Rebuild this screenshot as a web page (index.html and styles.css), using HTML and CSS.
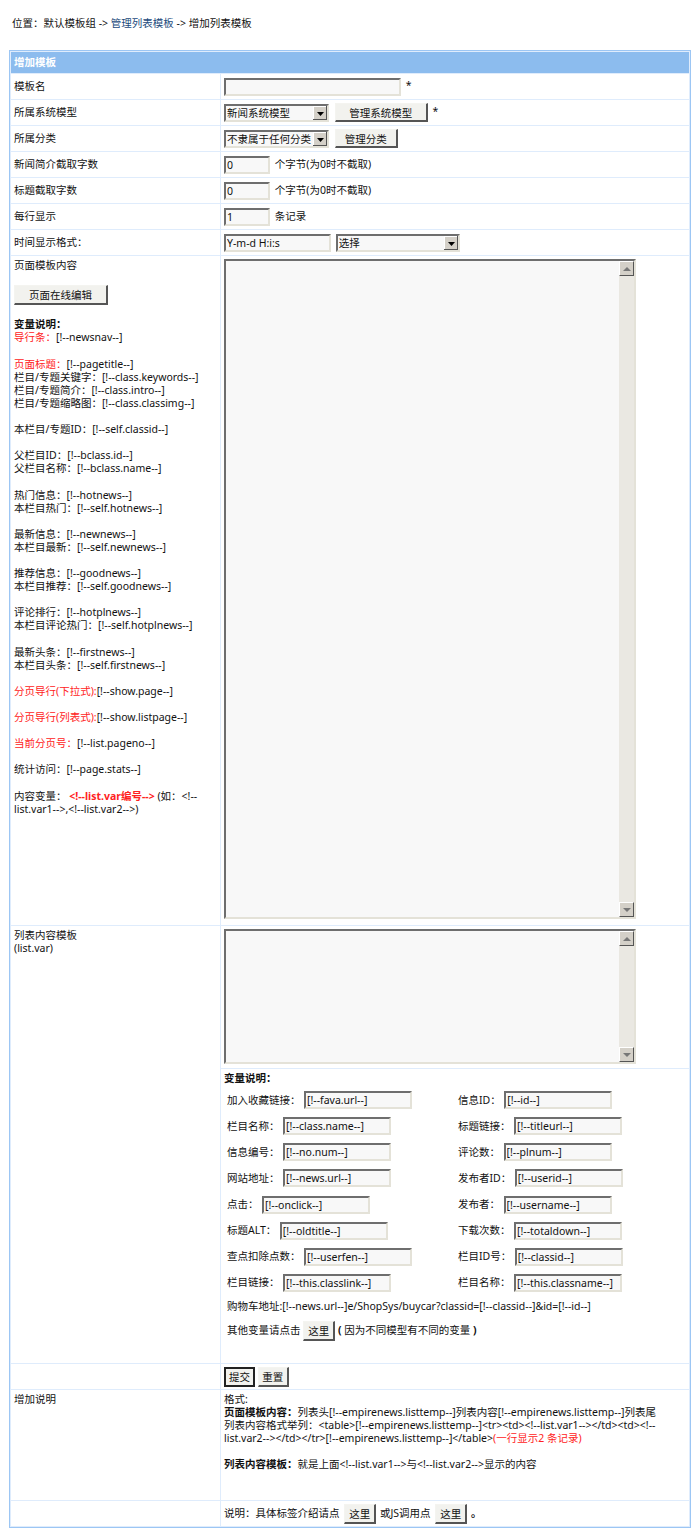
FILE: index.html
```html
<!DOCTYPE html>
<html lang="zh-CN">
    <head>
        <meta charset="UTF-8" />
        <title>增加列表模板</title>
        <link rel="stylesheet" href="styles.css">
    </head>
    <body>
        <div class="crumb">位置：默认模板组 -&gt; <a href="#">管理列表模板</a> -&gt; 增加列表模板</div>
        <form>
            <table class="tbl" cellspacing="1">
                <colgroup><col class="col-left"><col></colgroup>
                <tr class="head"><td colspan="2">增加模板</td></tr>
                <tr class="row">
                    <td>模板名</td>
                    <td><input class="txt w-name" type="text"> <span class="star">*</span></td>
                </tr>
                <tr class="row">
                    <td>所属系统模型</td>
                    <td>
                        <select class="sel w-sel"><option>新闻系统模型</option></select>
                        <button type="button" class="btn w-btn1">管理系统模型</button> <span class="star">*</span>
                    </td>
                </tr>
                <tr class="row">
                    <td>所属分类</td>
                    <td>
                        <select class="sel w-sel"><option>不隶属于任何分类</option></select>
                        <button type="button" class="btn w-btn2">管理分类</button>
                    </td>
                </tr>
                <tr class="row">
                    <td>新闻简介截取字数</td>
                    <td><input class="txt w-num" type="text" value="0"> 个字节(为0时不截取)</td>
                </tr>
                <tr class="row">
                    <td>标题截取字数</td>
                    <td><input class="txt w-num" type="text" value="0"> 个字节(为0时不截取)</td>
                </tr>
                <tr class="row">
                    <td>每行显示</td>
                    <td><input class="txt w-num" type="text" value="1"> 条记录</td>
                </tr>
                <tr class="row">
                    <td>时间显示格式：</td>
                    <td>
                        <input class="txt w-time" type="text" value="Y-m-d H:i:s">
                        <select class="sel w-sel2"><option>选择</option></select>
                    </td>
                </tr>
                <tr class="page-row">
                    <td class="top">
                        页面模板内容<br><br>
                        <button type="button" class="btn w-edit">页面在线编辑</button><br><br>
                        <b>变量说明：</b><br>
                        <span class="red">导行条：</span>[!--newsnav--]<br><br>
                        <span class="red">页面标题：</span>[!--pagetitle--]<br>
                        栏目/专题关键字：[!--class.keywords--]<br>
                        栏目/专题简介：[!--class.intro--]<br>
                        栏目/专题缩略图：[!--class.classimg--]<br><br>
                        本栏目/专题ID：[!--self.classid--]<br><br>
                        父栏目ID：[!--bclass.id--]<br>
                        父栏目名称：[!--bclass.name--]<br><br>
                        热门信息：[!--hotnews--]<br>
                        本栏目热门：[!--self.hotnews--]<br><br>
                        最新信息：[!--newnews--]<br>
                        本栏目最新：[!--self.newnews--]<br><br>
                        推荐信息：[!--goodnews--]<br>
                        本栏目推荐：[!--self.goodnews--]<br><br>
                        评论排行：[!--hotplnews--]<br>
                        本栏目评论热门：[!--self.hotplnews--]<br><br>
                        最新头条：[!--firstnews--]<br>
                        本栏目头条：[!--self.firstnews--]<br><br>
                        <span class="red">分页导行(下拉式):</span>[!--show.page--]<br><br>
                        <span class="red">分页导行(列表式):</span>[!--show.listpage--]<br><br>
                        <span class="red">当前分页号：</span>[!--list.pageno--]<br><br>
                        统计访问：[!--page.stats--]<br><br>
                        内容变量： <b class="red">&lt;!--list.var编号--&gt;</b> (如：&lt;!--list.var1--&gt;,&lt;!--list.var2--&gt;)
                    </td>
                    <td class="top">
                        <div class="editor big">
                            <textarea></textarea>
                            <div class="scroll"><span class="sb up"></span><span class="track"></span><span class="sb down"></span></div>
                        </div>
                    </td>
                </tr>
                <tr class="list-row">
                    <td class="top" rowspan="2">列表内容模板<br>(list.var)</td>
                    <td class="top">
                        <div class="editor small">
                            <textarea></textarea>
                            <div class="scroll"><span class="sb up"></span><span class="track"></span><span class="sb down"></span></div>
                        </div>
                    </td>
                </tr>
                <tr class="vars-row">
                    <td class="top">
                        <b>变量说明：</b>
                        <div class="vars">
                            <label class="var">加入收藏链接：<input class="txt w-var" type="text" value="[!--fava.url--]"></label>
                            <label class="var">信息ID：<input class="txt w-var" type="text" value="[!--id--]"></label>
                            <label class="var">栏目名称：<input class="txt w-var" type="text" value="[!--class.name--]"></label>
                            <label class="var">标题链接：<input class="txt w-var" type="text" value="[!--titleurl--]"></label>
                            <label class="var">信息编号：<input class="txt w-var" type="text" value="[!--no.num--]"></label>
                            <label class="var">评论数：<input class="txt w-var" type="text" value="[!--plnum--]"></label>
                            <label class="var">网站地址：<input class="txt w-var" type="text" value="[!--news.url--]"></label>
                            <label class="var">发布者ID：<input class="txt w-var" type="text" value="[!--userid--]"></label>
                            <label class="var">点击：<input class="txt w-var" type="text" value="[!--onclick--]"></label>
                            <label class="var">发布者：<input class="txt w-var" type="text" value="[!--username--]"></label>
                            <label class="var">标题ALT：<input class="txt w-var" type="text" value="[!--oldtitle--]"></label>
                            <label class="var">下载次数：<input class="txt w-var" type="text" value="[!--totaldown--]"></label>
                            <label class="var">查点扣除点数：<input class="txt w-var" type="text" value="[!--userfen--]"></label>
                            <label class="var">栏目ID号：<input class="txt w-var" type="text" value="[!--classid--]"></label>
                            <label class="var">栏目链接：<input class="txt w-var" type="text" value="[!--this.classlink--]"></label>
                            <label class="var">栏目名称：<input class="txt w-var" type="text" value="[!--this.classname--]"></label>
                        </div>
                        <div class="note cart">购物车地址:[!--news.url--]e/ShopSys/buycar?classid=[!--classid--]&amp;id=[!--id--]</div>
                        <div class="note">其他变量请点击 <button type="button" class="btn w-here">这里</button> <b>(</b> 因为不同模型有不同的变量 <b>)</b></div>
                    </td>
                </tr>
                <tr class="row">
                    <td></td>
                    <td>
                        <button type="submit" class="btn w-sub main">提交</button>
                        <button type="reset" class="btn w-sub">重置</button>
                    </td>
                </tr>
                <tr class="desc-row">
                    <td class="top">增加说明</td>
                    <td class="top">
                        格式:<br>
                        <b>页面模板内容：</b>列表头[!--empirenews.listtemp--]列表内容[!--empirenews.listtemp--]列表尾<br>
                        列表内容格式举列：&lt;table&gt;[!--empirenews.listtemp--]&lt;tr&gt;&lt;td&gt;&lt;!--list.var1--&gt;&lt;/td&gt;&lt;td&gt;&lt;!--list.var2--&gt;&lt;/td&gt;&lt;/tr&gt;[!--empirenews.listtemp--]&lt;/table&gt;<span class="red">(一行显示2 条记录)</span><br><br>
                        <b>列表内容模板：</b>就是上面&lt;!--list.var1--&gt;与&lt;!--list.var2--&gt;显示的内容
                    </td>
                </tr>
                <tr class="row">
                    <td></td>
                    <td>
                        说明：具体标签介绍请点 <button type="button" class="btn w-here foot-btn">这里</button> 或JS调用点 <button type="button" class="btn w-here foot-btn">这里</button> <b>。</b>
                    </td>
                </tr>
            </table>
        </form>
    </body>
</html>
```

FILE: styles.css
```css
body {
    margin: 0;
    padding: 0 9px;
    background-color: #fff;
    color: #111;
    font-family: "Noto Sans", "Noto Sans CJK SC", sans-serif;
    font-size: 10.5px;
    line-height: 13.1px;
}
.crumb {
    height: 33px;
    padding: 17px 0 0 3px;
}
.crumb a {
    color: #1b4a7c;
    text-decoration: none;
}
.tbl {
    width: 682px;
    table-layout: fixed;
    border: 1px solid #9cc6f4;
    border-collapse: separate;
    border-spacing: 1px;
    background-color: #dfecfc;
}
.col-left {
    width: 209px;
}
.tbl td {
    padding: 0 3px;
    background-color: #fff;
}
.tbl .head td {
    height: 21px;
    background-color: #8cbcee;
    color: #fff;
    font-weight: bold;
}
.row td {
    height: 25px;
}
.top {
    vertical-align: top;
}
.tbl .top {
    padding-top: 3px;
}
.page-row td {
    height: 666px;
}
.list-row td {
    height: 139px;
}
.vars-row td {
    height: 291px;
}
.desc-row td {
    height: 107px;
}
.red {
    color: #f22;
}
.star {
    margin-left: 2px;
}
.txt, .sel, .btn, textarea {
    font-family: inherit;
    font-size: 10.5px;
    box-sizing: border-box;
    color: #111;
    vertical-align: middle;
}
.txt {
    height: 18px;
    padding: 0 1px;
    border: 2px solid;
    border-color: #6e6e6e #e4e2d8 #e4e2d8 #6e6e6e;
    background-color: #f8f8f8;
    outline: none;
}
.sel {
    height: 18px;
    padding: 0 14px 0 1px;
    border: 2px solid;
    border-color: #6e6e6e #e4e2d8 #e4e2d8 #6e6e6e;
    border-radius: 0;
    appearance: none;
    -webkit-appearance: none;
    background: #f8f8f8 url("data:image/svg+xml,%3Csvg xmlns='http://www.w3.org/2000/svg' width='14' height='14'%3E%3Crect width='14' height='14' fill='%23d4d0c8'/%3E%3Cpath d='M0 0h14v1H1v13H0z' fill='%23fff'/%3E%3Cpath d='M14 14H0v-1h13V0h1z' fill='%23555'/%3E%3Cpath d='M4 6h7L7.5 10z' fill='%23000'/%3E%3C/svg%3E") no-repeat right center;
}
.btn {
    height: 19px;
    padding: 0;
    border: 1px solid;
    border-color: #f4f4f0 #555 #555 #f4f4f0;
    border-width: 1px 2px 2px 1px;
    background-color: #f2f2ee;
    cursor: pointer;
}
.btn.main {
    border: 2px solid #222;
}
.w-name { width: 177px; }
.w-sel { width: 105px; }
.w-sel2 { width: 124px; margin-left: 2px; }
.w-btn1 { width: 93px; margin-left: 3px; }
.w-btn2 { width: 63px; margin-left: 3px; }
.w-num { width: 46px; margin-right: 2px; }
.w-time { width: 107px; }
.w-edit { width: 94px; height: 20px; }
.w-here { width: 32px; height: 20px; }
.foot-btn { margin: 0 1px 0 2px; }
.w-sub { width: 31px; height: 20px; }
.w-var { width: 108px; margin-left: 3.5px; }
.editor {
    display: flex;
    box-sizing: border-box;
    width: 412px;
    border: 2px solid;
    border-color: #6e6e6e #e4e2d8 #e4e2d8 #6e6e6e;
    background-color: #f8f8f8;
}
.big {
    height: 660px;
}
.small {
    height: 135px;
}
.editor textarea {
    flex: 1;
    min-width: 0;
    border: none;
    padding: 0;
    background: transparent;
    resize: none;
    outline: none;
}
.scroll {
    display: flex;
    flex-direction: column;
    width: 15px;
    background-color: #eae8e2;
}
.track {
    flex: 1;
}
.sb {
    display: flex;
    align-items: center;
    justify-content: center;
    box-sizing: border-box;
    height: 15px;
    border: 1px solid;
    border-color: #fff #555 #555 #fff;
    background-color: #d4d0c8;
}
.sb::after {
    content: "";
    border-left: 4px solid transparent;
    border-right: 4px solid transparent;
}
.up::after {
    border-bottom: 4px solid #777;
}
.down::after {
    border-top: 4px solid #777;
}
.vars {
    display: grid;
    grid-template-columns: 231px 1fr;
    grid-auto-rows: 26.1px;
    padding: 2px 0 0 3px;
    align-items: center;
}
.var {
    display: flex;
    align-items: center;
}
.note {
    padding-left: 3px;
}
.cart {
    margin-top: 4px;
    margin-bottom: 8px;
}
```
